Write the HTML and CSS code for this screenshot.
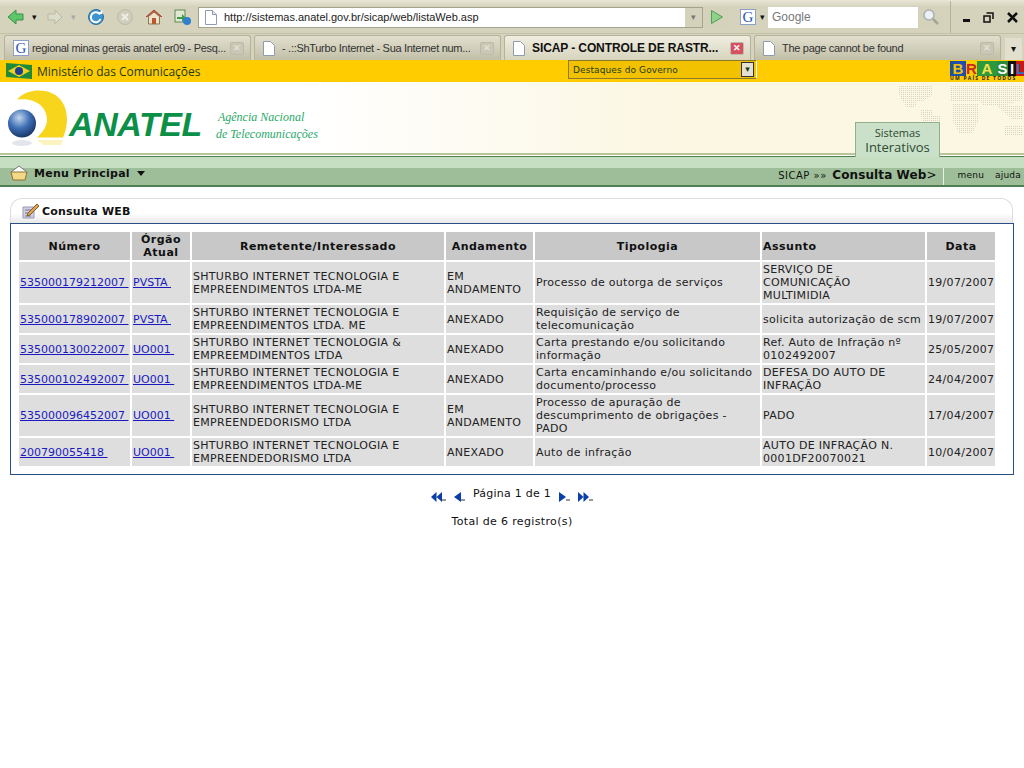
FILE: index.html
```html
<!DOCTYPE html>
<html lang="en">
<head>
    <meta charset="UTF-8">
    <title>SICAP - Controle de Rastreamento</title>
    <link rel="stylesheet" href="styles.css">
</head>
<body>
    <!-- browser chrome -->
    <div class="toolbar">
        <span class="tool-btn w-back"><svg width="18" height="18" viewBox="0 0 18 18"><path d="M1 9l8-7v4h7v6H9v4z" fill="#5cc66a" stroke="#3d8f4a"/></svg></span>
        <span class="tool-drop">&#9662;</span>
        <span class="tool-btn w-fwd"><svg width="18" height="18" viewBox="0 0 18 18"><path d="M16 9L9 2v4H2v6h7v4z" fill="#dcdccb" stroke="#b9b8a6"/></svg></span>
        <span class="tool-drop faded">&#9662;</span>
        <span class="tool-btn w-ref"><svg width="18" height="18" viewBox="0 0 18 18"><circle cx="9" cy="9" r="7.500" fill="#3f94cf" stroke="#2a6ea6"/><path d="M13 6.500A5 5 0 1 0 13.500 11" fill="none" stroke="#fff" stroke-width="2"/><path d="M10.500 6h5V2z" fill="#fff"/></svg></span>
        <span class="tool-btn w-stop"><svg width="18" height="18" viewBox="0 0 18 18"><circle cx="9" cy="9" r="7.500" fill="#cfcdbb" stroke="#bdbba8"/><path d="M6 6l6 6M12 6l-6 6" stroke="#eeeee4" stroke-width="2"/></svg></span>
        <span class="tool-btn w-home"><svg width="18" height="18" viewBox="0 0 18 18"><path d="M1 9l8-7 8 7" fill="#c9553c" stroke="#a5452f"/><path d="M3.500 8.500L9 4l5.500 4.500V16h-11z" fill="#efe2c8" stroke="#8a7755"/><rect x="7" y="10" width="4" height="6" fill="#b5592f"/></svg></span>
        <span class="tool-btn w-media"><svg width="18" height="18" viewBox="0 0 18 18"><rect x="1" y="2" width="10" height="12" fill="#dfe9d2" stroke="#5f8a55"/><path d="M3 9h5V6l4 4-4 4v-3H3z" fill="#3f9a45"/><circle cx="13" cy="13" r="4" fill="#2f7fd0"/></svg></span>
        <div class="address">
            <svg class="page-icon" width="12" height="15" viewBox="0 0 12 15"><path d="M.5.5h7l4 4v10H.5z" fill="#fff" stroke="#8f9bb0"/><path d="M7.500.5v4h4" fill="#dfe5ee" stroke="#8f9bb0"/></svg>
            <span class="address-text">http://sistemas.anatel.gov.br/sicap/web/listaWeb.asp</span>
            <span class="address-drop">&#9662;</span>
        </div>
        <span class="go-btn"><svg width="14" height="16" viewBox="0 0 14 16"><path d="M1.500 1.500l11 6.500-11 6.500z" fill="#8fd08a" stroke="#4f9f55"/></svg></span>
        <div class="search">
            <span class="search-g">G</span>
            <span class="search-drop">&#9662;</span>
            <span class="search-input">Google</span>
            <span class="search-btn"><svg width="18" height="18" viewBox="0 0 18 18"><circle cx="7" cy="7" r="5" fill="#eef1f4" stroke="#aab0b4" stroke-width="1.500"/><path d="M11 11l5 5" stroke="#a5a596" stroke-width="2.500"/></svg></span>
        </div>
        <div class="win-controls">
            <span class="win-min"></span>
            <svg width="11" height="11" viewBox="0 0 11 11"><path d="M3.500 1h6.500v6M1 4h6v6H1z" fill="none" stroke="#111" stroke-width="1.500"/></svg>
            <svg width="11" height="11" viewBox="0 0 11 11"><path d="M1 1l9 9M10 1l-9 9" stroke="#111" stroke-width="2.500"/></svg>
        </div>
    </div>

    <div class="tabbar">
        <div class="tab">
            <span class="tab-g">G</span>
            <span class="tab-title">regional minas gerais anatel er09 - Pesq...</span>
            <span class="tab-close">&#10005;</span>
        </div>
        <div class="tab">
            <svg class="tab-page" width="12" height="15" viewBox="0 0 12 15"><path d="M.5.5h7l4 4v10H.5z" fill="#fff" stroke="#8f9bb0"/></svg>
            <span class="tab-title">- .::ShTurbo Internet - Sua Internet num...</span>
            <span class="tab-close">&#10005;</span>
        </div>
        <div class="tab tab-active">
            <svg class="tab-page" width="12" height="15" viewBox="0 0 12 15"><path d="M.5.5h7l4 4v10H.5z" fill="#fff" stroke="#8f9bb0"/></svg>
            <span class="tab-title">SICAP - CONTROLE DE RASTR...</span>
            <span class="tab-close red">&#10005;</span>
        </div>
        <div class="tab">
            <svg class="tab-page" width="12" height="15" viewBox="0 0 12 15"><path d="M.5.5h7l4 4v10H.5z" fill="#fff" stroke="#8f9bb0"/></svg>
            <span class="tab-title">The page cannot be found</span>
            <span class="tab-close">&#10005;</span>
        </div>
        <span class="tab-list">&#9662;</span>
    </div>

    <!-- site header -->
    <div class="gov-bar">
        <svg class="flag" width="26" height="18" viewBox="0 0 26 18"><path d="M0 1l26 2v14L0 15z" fill="#1f8a3b"/><path d="M13 3l11 6-11 6L2 9z" fill="#f0d020"/><circle cx="13" cy="9" r="4" fill="#1d3f8f"/></svg>
        <span class="gov-title">Ministério das Comunicações</span>
        <div class="gov-select">
            <span>Destaques do Governo</span>
            <span class="gov-select-btn">&#9662;</span>
        </div>
        <div class="brasil">
            <div class="brasil-word"><b class="b1">B</b><b class="b2">R</b><b class="b3">A</b><b class="b4">S</b><b class="b5">I</b><b class="b6">L</b></div>
            <div class="brasil-sub">UM PAÍS DE TODOS</div>
        </div>
    </div>

    <div class="site-header">
        <svg class="world-map" width="139" height="72" viewBox="0 0 139 72">
            <defs><pattern id="dots" width="2" height="2" patternUnits="userSpaceOnUse"><rect width="1" height="1" fill="#d6d3bf"/></pattern></defs>
            <path d="M13 3h35v10l-10 6h-6l-2 6h-8l-6-8-3-8zM35 28h12v5h8v9H38zM65 3h72v15l-18 6H99l-4-4H65zM67 22h26v18l-6 12H75l-8-14zM112 24h25v14h-10zM120 43h18v10h-18z" fill="url(#dots)"/>
        </svg>
        <div class="logo">
            <svg width="60" height="70" viewBox="0 0 60 70" class="logo-mark">
                <defs><radialGradient id="ball" cx="0.4" cy="0.3" r="0.75"><stop offset="0" stop-color="#c4d6ee"/><stop offset="0.5" stop-color="#3e6fb5"/><stop offset="1" stop-color="#16305f"/></radialGradient></defs>
                <path d="M10 16.500C16 10 24 7.500 32 7.500 50 7.500 60 20 60 36c0 8-2 14-4 18.500H30C37 48 40 42 40 37 40 25 30 14 10 16.500z" fill="#f7d51d"/>
                <path d="M30 57h26l-2 5H36z" fill="#fbf3c0"/>
                <ellipse cx="15" cy="60" rx="10" ry="3" fill="#e2e6ec"/>
                <circle cx="15" cy="40.500" r="14" fill="url(#ball)"/>
            </svg>
            <span class="logo-name">ANATEL</span>
            <div class="logo-sub">
                <span>Agência Nacional</span>
                <span>de Telecomunicações</span>
            </div>
        </div>
        <div class="system-tab">
            <span class="system-small">Sistemas</span>
            <span class="system-big">Interativos</span>
        </div>
    </div>

    <div class="nav">
        <div class="nav-main">
            <div class="nav-menu">
                <svg width="18" height="16" viewBox="0 0 18 16"><path d="M1 7l8-6 8 6" fill="#fff" stroke="#777"/><path d="M1 7h16l-2 8H3z" fill="#f3d987" stroke="#8a7233"/></svg>
                <span class="nav-menu-text">Menu Principal</span>
                <span class="nav-caret"></span>
            </div>
            <div class="nav-crumb">
                <span class="crumb-sys">SICAP &raquo;&raquo;</span>
                <span class="crumb-page">Consulta Web</span><span class="crumb-arrow">&gt;</span>
            </div>
            <div class="nav-links">
                <span>menu</span>
                <span>ajuda</span>
            </div>
        </div>
    </div>

    <!-- content -->
    <div class="panel">
        <div class="panel-head">
            <svg width="18" height="16" viewBox="0 0 18 16"><path d="M1 4h11v11H1z" fill="#cfcfe0" stroke="#9a9ab5"/><path d="M3 7h6M3 10h6M3 13h6" stroke="#77779a"/><path d="M6 10L15 1l2 2-9 9-3 1z" fill="#d9a45a" stroke="#8c5c24"/></svg>
            <span>Consulta WEB</span>
        </div>
        <div class="panel-body">
            <table class="results">
                <colgroup>
                    <col class="c1"><col class="c2"><col class="c3"><col class="c4"><col class="c5"><col class="c6"><col class="c7">
                </colgroup>
                <thead>
                    <tr>
                        <th>Número</th>
                        <th>Órgão<br>Atual</th>
                        <th>Remetente/Interessado</th>
                        <th>Andamento</th>
                        <th>Tipologia</th>
                        <th class="left">Assunto</th>
                        <th>Data</th>
                    </tr>
                </thead>
                <tbody>
                    <tr class="tall">
                        <td><a href="#">535000179212007&nbsp;</a></td>
                        <td><a href="#">PVSTA&nbsp;</a></td>
                        <td>SHTURBO INTERNET TECNOLOGIA E EMPREENDIMENTOS LTDA-ME</td>
                        <td>EM ANDAMENTO</td>
                        <td>Processo de outorga de serviços</td>
                        <td>SERVIÇO DE<br>COMUNICAÇÃO<br>MULTIMIDIA</td>
                        <td>19/07/2007</td>
                    </tr>
                    <tr>
                        <td><a href="#">535000178902007&nbsp;</a></td>
                        <td><a href="#">PVSTA&nbsp;</a></td>
                        <td>SHTURBO INTERNET TECNOLOGIA E EMPREENDIMENTOS LTDA. ME</td>
                        <td>ANEXADO</td>
                        <td>Requisição de serviço de telecomunicação</td>
                        <td>solicita autorização de scm</td>
                        <td>19/07/2007</td>
                    </tr>
                    <tr>
                        <td><a href="#">535000130022007&nbsp;</a></td>
                        <td><a href="#">UO001&nbsp;</a></td>
                        <td>SHTURBO INTERNET TECNOLOGIA &amp; EMPREEMDIMENTOS LTDA</td>
                        <td>ANEXADO</td>
                        <td>Carta prestando e/ou solicitando informação</td>
                        <td>Ref. Auto de Infração nº 0102492007</td>
                        <td>25/05/2007</td>
                    </tr>
                    <tr>
                        <td><a href="#">535000102492007&nbsp;</a></td>
                        <td><a href="#">UO001&nbsp;</a></td>
                        <td>SHTURBO INTERNET TECNOLOGIA E EMPREENDIMENTOS LTDA-ME</td>
                        <td>ANEXADO</td>
                        <td>Carta encaminhando e/ou solicitando documento/processo</td>
                        <td>DEFESA DO AUTO DE INFRAÇÃO</td>
                        <td>24/04/2007</td>
                    </tr>
                    <tr class="tall">
                        <td><a href="#">535000096452007&nbsp;</a></td>
                        <td><a href="#">UO001&nbsp;</a></td>
                        <td>SHTURBO INTERNET TECNOLOGIA E EMPREENDEDORISMO LTDA</td>
                        <td>EM ANDAMENTO</td>
                        <td>Processo de apuração de descumprimento de obrigações - PADO</td>
                        <td>PADO</td>
                        <td>17/04/2007</td>
                    </tr>
                    <tr>
                        <td><a href="#">200790055418&nbsp;</a></td>
                        <td><a href="#">UO001&nbsp;</a></td>
                        <td>SHTURBO INTERNET TECNOLOGIA E EMPREENDEDORISMO LTDA</td>
                        <td>ANEXADO</td>
                        <td>Auto de infração</td>
                        <td>AUTO DE INFRAÇÃO N. 0001DF20070021</td>
                        <td>10/04/2007</td>
                    </tr>
                </tbody>
            </table>
        </div>
    </div>

    <div class="pager">
        <svg width="15" height="10" viewBox="0 0 15 10"><path d="M0 5l5.500-5v10zM5.500 5L11 0v10z" fill="#0b3fa8"/><path d="M11 8h4" stroke="#333"/></svg>
        <svg width="11" height="10" viewBox="0 0 11 10"><path d="M0 5l7-5v10z" fill="#0b3fa8"/><path d="M7 8h4" stroke="#333"/></svg>
        <span class="pager-text">Página 1 de 1</span>
        <svg width="11" height="10" viewBox="0 0 11 10"><path d="M7 5L0 0v10z" fill="#0b3fa8"/><path d="M7 8h4" stroke="#333"/></svg>
        <svg width="15" height="10" viewBox="0 0 15 10"><path d="M5.500 5L0 0v10zM11 5L5.500 0v10z" fill="#0b3fa8"/><path d="M11 8h4" stroke="#333"/></svg>
    </div>
    <p class="total">Total de 6 registro(s)</p>
</body>
</html>
```

FILE: styles.css
```css
body {
    margin: 0;
    background: #fff;
    font-family: 'DejaVu Sans', Verdana, sans-serif;
    font-size: 11px;
    color: #111;
    overflow: hidden;
}

/* browser chrome */
.toolbar {
    height: 34px;
    box-sizing: border-box;
    display: flex;
    align-items: center;
    padding: 1px 0 0 7px;
    background: linear-gradient(#e9e6d6, #d6d3bd 20%, #d6d3bd);
    border-bottom: 1px solid #c4c1aa;
    font-family: 'Liberation Sans', Arial, sans-serif;
}

.tool-btn {
    display: flex;
    align-items: center;
}

.tool-drop {
    width: 18px;
    margin-right: 3px;
    text-align: center;
    font-size: 9px;
    color: #111;
}

.tool-drop.faded {
    color: #aaa;
}

.w-ref, .w-stop, .w-home {
    margin-right: 11px;
}

.w-ref {
    margin-left: 2px;
}

.w-media {
    margin-right: 6px;
}

.address {
    width: 505px;
    height: 21px;
    box-sizing: border-box;
    display: flex;
    align-items: center;
    background: #fff;
    border: 1px solid #a5a28e;
    padding-left: 6px;
    font-size: 11px;
}

.page-icon {
    margin-right: 7px;
}

.address-text {
    flex: 1;
    color: #222;
}

.address-drop {
    width: 17px;
    height: 100%;
    background: #d5d2bc;
    color: #777;
    text-align: center;
    line-height: 19px;
    font-size: 9px;
}

.go-btn {
    width: 23px;
    height: 21px;
    margin-left: 2px;
    background: #d5d2bc;
    display: flex;
    align-items: center;
    justify-content: center;
}

.search {
    display: flex;
    align-items: center;
    margin-left: 12px;
}

.search-g, .tab-g {
    font-family: 'Liberation Serif', serif;
    color: #2a55b8;
    background: #fff;
    border: 1px solid #8aa0c8;
    box-sizing: border-box;
    width: 16px;
    height: 16px;
    line-height: 15px;
    text-align: center;
    font-size: 15px;
}

.search-drop {
    width: 12px;
    font-size: 9px;
    text-align: center;
}

.search-input {
    width: 150px;
    height: 21px;
    box-sizing: border-box;
    background: #fff;
    color: #777;
    padding-left: 4px;
    font-size: 12px;
    line-height: 21px;
}

.search-btn {
    width: 25px;
    height: 21px;
    background: #d5d2bc;
    display: flex;
    align-items: center;
    justify-content: center;
}

.win-controls {
    margin-left: 7px;
    padding-left: 12px;
    height: 32px;
    border-left: 1px solid #b5b29c;
    display: flex;
    align-items: center;
    gap: 13px;
}

.win-min {
    width: 7px;
    height: 3px;
    background: #111;
    margin-top: 7px;
}

.tabbar {
    height: 26px;
    box-sizing: border-box;
    display: flex;
    align-items: flex-end;
    gap: 3px;
    padding-left: 4px;
    background: #d6d3bd;
    font-family: 'Liberation Sans', Arial, sans-serif;
    font-size: 11px;
}

.tab {
    width: 247px;
    height: 25px;
    flex-shrink: 0;
    box-sizing: border-box;
    display: flex;
    align-items: center;
    padding: 0 6px 0 8px;
    background: linear-gradient(#e2dfce, #c2bfa8);
    border: 1px solid #b5b29c;
    border-bottom: 0;
    border-radius: 3px 3px 0 0;
    color: #333;
    letter-spacing: -0.3px;
}

.tab-active {
    background: linear-gradient(#f0eee0, #d6d3bd);
    font-weight: bold;
    font-size: 12px;
    letter-spacing: -0.1px;
    color: #111;
}

.tab-g {
    margin-right: 3px;
    letter-spacing: 0;
    flex-shrink: 0;
}

.tab-page {
    margin-right: 7px;
    flex-shrink: 0;
}

.tab-title {
    flex: 1;
    white-space: nowrap;
}

.tab-close {
    width: 14px;
    height: 13px;
    box-sizing: border-box;
    flex-shrink: 0;
    background: #c9c7b5;
    border: 1px solid #bdbba8;
    border-radius: 2px;
    color: #e4e2d6;
    font-size: 9px;
    font-weight: bold;
    line-height: 11px;
    text-align: center;
    letter-spacing: 0;
}

.tab-close.red {
    background: #d8505f;
    color: #fff;
}

.tab-list {
    width: 17px;
    height: 22px;
    margin-left: 1px;
    line-height: 22px;
    text-align: center;
    font-size: 10px;
    background: #e2dfce;
}

/* site header */
.gov-bar {
    height: 22px;
    display: flex;
    align-items: center;
    padding-left: 6px;
    background: #ffcc00;
    color: #1a3a10;
    font-family: 'Open Sans', sans-serif;
    font-size: 12px;
}

.flag {
    margin-right: 5px;
}

.gov-title {
    width: 531px;
}

.gov-select {
    align-self: flex-start;
    width: 189px;
    height: 19px;
    box-sizing: border-box;
    display: flex;
    align-items: center;
    justify-content: space-between;
    padding-left: 4px;
    border: 1px solid #8c7a2a;
    border-right-color: #fff;
    background: #f2c200;
    font-family: 'DejaVu Sans', sans-serif;
    font-size: 9px;
    letter-spacing: 0.1px;
}

.gov-select-btn {
    width: 11px;
    height: 13px;
    margin-right: 2px;
    background: #e4e1d2;
    border: 1px solid #333;
    line-height: 12px;
    text-align: center;
    letter-spacing: 0;
}

.brasil {
    margin-left: auto;
    width: 74px;
    overflow: hidden;
    line-height: 1;
}

.brasil-word {
    display: flex;
    font-family: 'Liberation Sans', sans-serif;
    font-size: 15px;
    height: 15px;
}

.brasil-word b {
    display: block;
    text-align: center;
    line-height: 15px;
}

.b1 { width: 16px; background: #1f4fa8; color: #f2c200; }
.b2 { width: 11px; background: #ffcc00; color: #c8281e; }
.b3 { width: 20px; background: #2c9a3c; color: #f7e14a; }
.b4 { width: 11px; color: #fff; background: #2c8a3c; }
.b5 { width: 8px; background: #111; color: #fff; }
.b6 { width: 8px; background: #c81818; color: #2f6fc0; }

.brasil-sub {
    font-size: 5px;
    font-weight: bold;
    letter-spacing: 1.2px;
    color: #223;
    white-space: nowrap;
}

.site-header {
    height: 71px;
    position: relative;
    display: flex;
    justify-content: space-between;
    align-items: flex-end;
    background: linear-gradient(90deg, #fff 30%, #fbf7e3 65%, #fbf7e3);
}

.world-map {
    position: absolute;
    right: 0;
    top: 0;
}

.logo {
    display: flex;
    align-items: center;
    padding-left: 7px;
    height: 71px;
}

.logo-mark {
    margin-right: 2px;
}

.logo-name {
    font-family: 'Liberation Sans', sans-serif;
    font-weight: bold;
    font-style: italic;
    font-size: 34px;
    color: #0c9048;
    letter-spacing: -0.4px;
    margin-top: 14px;
}

.logo-sub {
    display: flex;
    flex-direction: column;
    margin: 16px 0 0 14px;
    font-family: 'Liberation Serif', serif;
    font-style: italic;
    font-size: 12px;
    line-height: 17px;
    color: #2aa868;
}

.logo-sub span:first-child {
    padding-left: 2px;
}

.system-tab {
    position: relative;
    width: 85px;
    height: 35px;
    margin: 0 84px -4px 0;
    box-sizing: border-box;
    display: flex;
    flex-direction: column;
    align-items: center;
    background: #cbe0c8;
    border: 1px solid #8fb08a;
    border-bottom: 0;
    font-family: 'Open Sans', sans-serif;
    color: #2c4a35;
    line-height: 15px;
    padding-top: 2px;
}

.system-small {
    font-size: 11px;
}

.system-big {
    font-size: 13px;
}

.nav {
    box-sizing: border-box;
    padding-top: 1px;
    border-top: 2px solid #b8c59a;
    background: #fff;
}

.nav-main {
    height: 31px;
    box-sizing: border-box;
    display: flex;
    align-items: flex-end;
    border-top: 1px solid #4f7f50;
    border-bottom: 2px solid #4f7f50;
    background: linear-gradient(#c6dfc2 41%, #9dbe98 41%);
}

.nav-menu {
    display: flex;
    align-items: center;
    height: 16px;
    padding: 0 0 4px 10px;
    font-weight: bold;
    letter-spacing: 0.25px;
}

.nav-menu-text {
    margin-left: 6px;
}

.nav-caret {
    margin-left: 7px;
    border: 4px solid transparent;
    border-top: 5px solid #111;
    border-bottom: 0;
}

.nav-crumb {
    margin-left: auto;
    padding: 0 6px 0 0;
    height: 17px;
    border-right: 1px solid #e8f0e4;
}

.crumb-sys {
    font-size: 10px;
    letter-spacing: 0.5px;
}

.crumb-page {
    font-size: 12px;
    font-weight: bold;
    margin-left: 2px;
    letter-spacing: 0.1px;
}

.crumb-arrow {
    font-size: 12px;
}

.nav-links {
    display: flex;
    gap: 11px;
    padding: 0 3px 5px 14px;
    font-size: 9px;
    letter-spacing: 0.2px;
}

/* content */
.panel {
    margin: 11px 0 0 10px;
    width: 1004px;
    box-sizing: border-box;
}

.panel-head {
    height: 25px;
    box-sizing: border-box;
    margin-right: 1px;
    display: flex;
    align-items: center;
    gap: 2px;
    padding-left: 11px;
    border: 1px solid #ddd;
    border-bottom: 0;
    border-radius: 12px 12px 0 0;
    background: linear-gradient(#fff 60%, #e8e8e8);
    font-weight: bold;
    letter-spacing: 0.2px;
}

.panel-body {
    border: 1px solid #2a4f85;
    padding: 6px 17px 6px 6px;
}

.results {
    width: 978px;
    table-layout: fixed;
    border-collapse: separate;
    border-spacing: 2px;
    line-height: 13px;
}

.c1 { width: 111px; }
.c2 { width: 58px; }
.c3 { width: 252px; }
.c4 { width: 87px; }
.c5 { width: 225px; }
.c6 { width: 163px; }
.c7 { width: 68px; }

.results th {
    height: 28px;
    padding: 0 1px;
    background: #c8c8c8;
    font-weight: bold;
    letter-spacing: 0.5px;
    text-align: center;
}

.results th.left {
    text-align: left;
}

.results td {
    height: 28px;
    padding: 0 3px 0 1px;
    background: #dedede;
    color: #222;
    letter-spacing: 0.3px;
    overflow: hidden;
}

.results .tall td {
    height: 41px;
}

.results a {
    color: #1a1ac0;
    white-space: nowrap;
    letter-spacing: 0;
}

.pager {
    margin-top: 10px;
    display: flex;
    justify-content: center;
    align-items: center;
    gap: 8px;
    height: 22px;
}

.pager svg {
    margin-top: 2px;
}

.pager-text {
    margin-bottom: 5px;
    letter-spacing: 0.25px;
}

.total {
    margin: 8px 0 0;
    text-align: center;
    letter-spacing: 0.35px;
}
```
